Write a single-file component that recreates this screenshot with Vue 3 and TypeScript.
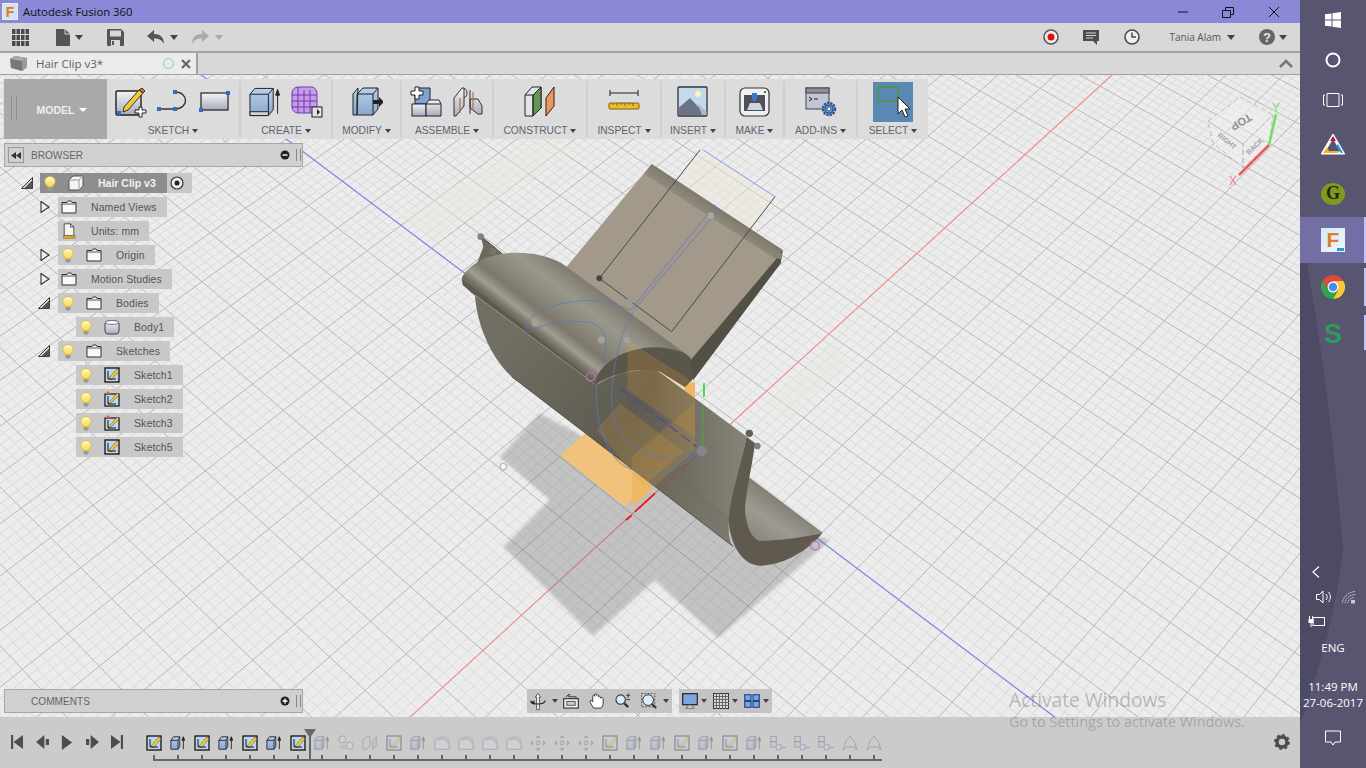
<script setup lang="ts">
// plane grid: two vanishing points, measured from the view
const O = [701, 451]
const VR = [3331, -1955]
const VB = [-2265, -1780]
const UA = 0.01277
const UB = 0.0125

function project(u: number, v: number) {
  const p = u * UA
  const q = v * UB
  const w = 1 + p + q
  const x = (O[0] + VR[0] * p + VB[0] * q) / w
  const y = (O[1] + VR[1] * p + VB[1] * q) / w
  return `${x.toFixed(1)},${y.toFixed(1)}`
}

function seg(u1: number, v1: number, u2: number, v2: number) {
  return `M${project(u1, v1)}L${project(u2, v2)}`
}

let minorPath = ''
let majorPath = ''
for (let i = -130; i <= 130; i++) {
  const n = i / 5
  const d = seg(n, -30, n, 30) + seg(-26, n, 26, n)
  if (i % 5 === 0) majorPath += d
  else minorPath += d
}
const redAxis = seg(-30, 0, 30, 0)
const blueAxis = seg(0, -30, 0, 30)

interface RibbonGroup {
  label: string
  width: number
  icons: string[]
  select?: boolean
}

const ribbon: RibbonGroup[] = [
  { label: 'SKETCH', width: 134, icons: ['r-sketch', 'r-line', 'r-rect'] },
  { label: 'CREATE', width: 92, icons: ['r-extrude', 'r-form'] },
  { label: 'MODIFY', width: 69, icons: ['r-press'] },
  { label: 'ASSEMBLE', width: 92, icons: ['r-assemble', 'r-joint'] },
  { label: 'CONSTRUCT', width: 94, icons: ['r-plane'] },
  { label: 'INSPECT', width: 74, icons: ['r-measure'] },
  { label: 'INSERT', width: 64, icons: ['r-picture'] },
  { label: 'MAKE', width: 59, icons: ['r-print'] },
  { label: 'ADD-INS', width: 73, icons: ['r-addin'] },
  { label: 'SELECT', width: 70, icons: ['r-select'], select: true }
]

interface TreeRow {
  label: string
  depth: number
  arrow?: 'open' | 'closed'
  bulb?: boolean
  icon: string
}

const tree: TreeRow[] = [
  { label: 'Named Views', depth: 1, arrow: 'closed', icon: 't-folder' },
  { label: 'Units: mm', depth: 1, icon: 't-units' },
  { label: 'Origin', depth: 1, arrow: 'closed', bulb: true, icon: 't-folder' },
  { label: 'Motion Studies', depth: 1, arrow: 'closed', icon: 't-folder' },
  { label: 'Bodies', depth: 1, arrow: 'open', bulb: true, icon: 't-folder' },
  { label: 'Body1', depth: 2, bulb: true, icon: 't-body' },
  { label: 'Sketches', depth: 1, arrow: 'open', bulb: true, icon: 't-folder' },
  { label: 'Sketch1', depth: 2, bulb: true, icon: 'tl-sketch' },
  { label: 'Sketch2', depth: 2, bulb: true, icon: 't-sketchw' },
  { label: 'Sketch3', depth: 2, bulb: true, icon: 't-sketchw' },
  { label: 'Sketch5', depth: 2, bulb: true, icon: 'tl-sketch' }
]

const timelineDone = ['tl-sketch', 'tl-extrude', 'tl-sketch', 'tl-extrude', 'tl-sketch', 'tl-extrude', 'tl-sketch']
const timelineRest = [
  'tl-extrude', 'tl-combine', 'tl-planes', 'tl-sketch', 'tl-extrude', 'tl-fillet', 'tl-fillet', 'tl-fillet',
  'tl-fillet', 'tl-move', 'tl-move', 'tl-move', 'tl-sketch', 'tl-extrude', 'tl-extrude', 'tl-sketch',
  'tl-extrude', 'tl-sketch', 'tl-extrude', 'tl-stack', 'tl-stack', 'tl-stack', 'tl-shell', 'tl-shell'
]

const modelPoints = [
  [122, 260, 10, '#7b7b78'], [158, 305, 11, '#77756c'], [478, 385, 9, '#403e38'], [570, 452, 10, '#9c9a90'],
  [285, 520, 10, '#a5a398'], [484, 570, 11, '#a5a49b'], [560, 570, 10, '#a5a49b'], [812, 197, 10, '#b0ab9e'],
  [1018, 318, 9, '#8a887e'], [928, 850, 11, '#55534c'], [952, 888, 10, '#77756e'], [785, 903, 16, '#8c8690']
] as const
</script>

<template>
  <svg class="defs" aria-hidden="true">
    <defs>
      <filter id="soft" x="-10%" y="-10%" width="120%" height="120%">
        <feGaussianBlur stdDeviation="4" />
      </filter>
      <linearGradient id="g-top" gradientUnits="userSpaceOnUse" x1="65" y1="385" x2="199" y2="211">
        <stop offset="0" stop-color="#69655a" />
        <stop offset=".06" stop-color="#7a7669" />
        <stop offset=".15" stop-color="#a09d91" />
        <stop offset=".3" stop-color="#7c786b" />
        <stop offset=".5" stop-color="#8c897d" />
        <stop offset=".72" stop-color="#9a988d" />
        <stop offset="1" stop-color="#7f7b6e" />
      </linearGradient>
      <linearGradient id="g-side" gradientUnits="userSpaceOnUse" x1="200" y1="550" x2="900" y2="1080">
        <stop offset="0" stop-color="#716e63" />
        <stop offset=".5" stop-color="#5e5b50" />
        <stop offset="1" stop-color="#7b796d" />
      </linearGradient>
      <linearGradient id="g-side-top" gradientUnits="userSpaceOnUse" x1="915" y1="880" x2="720" y2="960">
        <stop offset="0" stop-color="#9a988c" stop-opacity=".45" />
        <stop offset="1" stop-color="#9a988c" stop-opacity="0" />
      </linearGradient>
      <linearGradient id="g-lip" gradientUnits="userSpaceOnUse" x1="830" y1="170" x2="790" y2="230">
        <stop offset="0" stop-color="#7f7a6d" />
        <stop offset="1" stop-color="#a2998a" />
      </linearGradient>
      <linearGradient id="g-inner" gradientUnits="userSpaceOnUse" x1="1040" y1="1050" x2="960" y2="1170">
        <stop offset="0" stop-color="#7f7c71" />
        <stop offset=".55" stop-color="#9c9b92" />
        <stop offset="1" stop-color="#8b8980" />
      </linearGradient>
      <linearGradient id="ic-blue" x1="0" y1="0" x2="0" y2="1">
        <stop offset="0" stop-color="#b8cfe8" />
        <stop offset="1" stop-color="#88a8d0" />
      </linearGradient>
      <linearGradient id="ic-gray" x1="0" y1="0" x2="0" y2="1">
        <stop offset="0" stop-color="#f4f4f6" />
        <stop offset="1" stop-color="#a8acbc" />
      </linearGradient>
      <linearGradient id="bulb" x1="0" y1="0" x2="0" y2="1">
        <stop offset="0" stop-color="#fffcc8" />
        <stop offset="1" stop-color="#f8d63c" />
      </linearGradient>

      <symbol id="bulb-ic" viewBox="0 0 12 15">
        <path d="M6 .5C2.500 .5 .7 3 .7 5.500 .7 8 3 9 3.500 11H8.500C9 9 11.300 8 11.300 5.500 11.300 3 9.500 .5 6 .5z" fill="url(#bulb)" stroke="#c2ac4c" stroke-width=".7" />
        <rect x="3.500" y="11" width="5" height="3.500" rx="1" fill="#9a9a9a" />
      </symbol>
      <symbol id="r-sketch" viewBox="0 0 32 32">
        <rect x="1" y="5" width="25" height="24" rx="1" fill="url(#ic-gray)" stroke="#222" stroke-width="1.4" />
        <path d="M9 21 24 4l4 3-15 17-5 2z" fill="#f6c83c" stroke="#333" />
        <path d="M24 4l3-2 3 3-2 2z" fill="#d0743c" stroke="#333" />
        <rect x="2" y="25" width="4" height="4" fill="#3566c8" />
        <path d="M20 24h4v-3h3v3h4v3h-4v4h-3v-4h-4z" fill="#fff" stroke="#222" />
      </symbol>
      <symbol id="r-line" viewBox="0 0 32 32">
        <path d="M3 23H18C32 23 32 6 18 6" fill="none" stroke="#333" stroke-width="1.4" />
        <rect x="0" y="21" width="4" height="4" fill="#3566c8" />
        <rect x="16" y="21" width="4" height="4" fill="#3566c8" />
        <rect x="16" y="4" width="4" height="4" fill="#3566c8" />
      </symbol>
      <symbol id="r-rect" viewBox="0 0 32 32">
        <rect x="2" y="7" width="27" height="17" fill="url(#ic-gray)" stroke="#222" stroke-width="1.2" />
        <rect x="27" y="5" width="4" height="4" fill="#3566c8" />
        <rect x="0" y="22" width="4" height="4" fill="#3566c8" />
      </symbol>
      <symbol id="r-extrude" viewBox="0 0 33 32">
        <path d="M1 8 6 2H25V24L20 30H1z" fill="url(#ic-blue)" stroke="#222" />
        <path d="M1 8H20L25 2M20 8V30" fill="none" stroke="#222" />
        <path d="M1 26H20V30H1z" fill="#cfd4dc" stroke="#222" />
        <path d="M29.500 28V5M27.500 9 29.500 3l2 6z" fill="#222" stroke="#222" />
      </symbol>
      <symbol id="r-form" viewBox="0 0 32 32">
        <rect x="1" y="1" width="25" height="26" rx="6" fill="#c89cec" stroke="#6a3ca8" />
        <path d="M7 1V27M13 4V27M19 4V27M1 9H26M1 15H26M1 21H26" stroke="#6a3ca8" />
        <rect x="21" y="21" width="10" height="10" fill="#e4e4e4" stroke="#222" />
        <path d="M23 26h3v-3l3 3-3 3v-3z" fill="#222" />
      </symbol>
      <symbol id="r-press" viewBox="0 0 32 32">
        <path d="M2 29V8L7 2H7L6 29zM6 29V8L12 2H27V23L22 29z" fill="url(#ic-blue)" stroke="#222" />
        <path d="M6 8H22V29M22 8 27 2" fill="none" stroke="#222" />
        <path d="M22 14h6v-3l5 5-5 5v-3h-6z" fill="#222" />
      </symbol>
      <symbol id="r-assemble" viewBox="0 0 32 32">
        <path d="M5 6 9 2H20V18H5z" fill="#7fa4d2" stroke="#222" />
        <rect x="2" y="18" width="14" height="12" fill="url(#ic-gray)" stroke="#222" />
        <path d="M16 18l3-4h10l2 4v12H16z" fill="url(#ic-gray)" stroke="#222" />
        <path d="M16 18H31" stroke="#222" />
        <path d="M5 1h4v4h4v4H9v4H5V9H1V5h4z" fill="#fff" stroke="#222" />
      </symbol>
      <symbol id="r-joint" viewBox="0 0 32 32">
        <path d="M2 12 10 2h2V20L4 30H2zM18 13h8l4 7v8h-4l-8-6z" fill="url(#ic-gray)" stroke="#333" />
        <path d="M12 2c4 2 4 8 0 10M18 4v24" fill="none" stroke="#333" />
        <path d="M21 6V24M8 12V27" stroke="#d06830" stroke-width="1.2" />
      </symbol>
      <symbol id="r-plane" viewBox="0 0 32 32">
        <path d="M1 9 8 1h9V22L9 30H1z" fill="#dfe3ea" stroke="#222" />
        <path d="M9 9 17 1V22L9 30z" fill="#5e9a54" stroke="#222" />
        <path d="M1 9H9V30" fill="none" stroke="#222" />
        <path d="M22 12 30 1V20L22 30z" fill="#e89860" stroke="#401808" />
      </symbol>
      <symbol id="r-measure" viewBox="0 0 32 32">
        <path d="M2 7H30M2 4V10M30 4V10" stroke="#222" fill="none" />
        <rect x="1" y="17" width="30" height="6" rx="1" fill="#eebb30" stroke="#7a6010" />
        <path d="M5 17v2M9 17v3M13 17v2M17 17v3M21 17v2M25 17v3" stroke="#7a6010" />
      </symbol>
      <symbol id="r-picture" viewBox="0 0 32 32">
        <rect x="1" y="1" width="29" height="29" rx="1" fill="#c4d8ee" stroke="#333" stroke-width="1.3" />
        <circle cx="21" cy="8" r="3" fill="#fff4b0" />
        <path d="M1.500 29V22L13 12l16 17z" fill="#6a7484" />
        <path d="M20 17 29.500 26V29H25z" fill="#aeb6c2" />
      </symbol>
      <symbol id="r-print" viewBox="0 0 32 32">
        <rect x="1" y="2" width="29" height="28" rx="5" fill="#eef0f3" stroke="#333" stroke-width="1.2" />
        <rect x="5" y="9" width="21" height="16" fill="#4c505a" />
        <path d="M8 24 11 17H21L24 24z" fill="#d0d4dc" />
        <path d="M13 7H18V13L15.500 16 13 13z" fill="#3f78c8" />
        <rect x="25" y="5" width="2" height="2" fill="#1c8a2c" />
      </symbol>
      <symbol id="r-addin" viewBox="0 0 32 32">
        <rect x="1" y="2" width="23" height="21" fill="#c0c6d6" stroke="#444" />
        <rect x="1" y="2" width="23" height="5" fill="#8e8e94" stroke="#444" />
        <path d="M4 11 7 13 4 15M9 13H13" fill="none" stroke="#222" />
        <circle cx="24" cy="23" r="6" fill="#7fa3d8" stroke="#2e5490" stroke-width="2.500" stroke-dasharray="2.200 1" />
        <circle cx="24" cy="23" r="4" fill="#7fa3d8" stroke="#244a88" />
        <circle cx="24" cy="23" r="2" fill="#fff" stroke="#244a88" />
      </symbol>
      <symbol id="r-select" viewBox="0 0 40 40">
        <rect width="40" height="40" fill="#5a88b2" />
        <rect x="5" y="5" width="20" height="14" fill="none" stroke="#4a9a2a" stroke-width="1.200" />
        <path d="M25 15V32L29 28 32 35 35 34 32 27H37z" fill="#fff" stroke="#222" />
      </symbol>

      <symbol id="t-folder" viewBox="0 0 16 14">
        <path d="M1 2.500H6L7 1H10L11 2.500H15V13H1z" fill="#f8f8f8" stroke="#333" />
        <path d="M1 4H15" stroke="#555" />
      </symbol>
      <symbol id="t-units" viewBox="0 0 16 20">
        <path d="M2 1H10L14 5V16H2z" fill="#f4f4f4" stroke="#333" />
        <path d="M10 1V5H14" fill="none" stroke="#333" />
        <rect x="1" y="16" width="15" height="3" fill="#d8a428" stroke="#7a5a10" stroke-width=".5" />
      </symbol>
      <symbol id="t-cube" viewBox="0 0 16 16">
        <path d="M1 5 5 1H15V11L11 15H1z" fill="#f4f4f4" stroke="#555" />
        <path d="M11 5H1M11 5 15 1M11 5V15" fill="none" stroke="#999" />
      </symbol>
      <symbol id="t-body" viewBox="0 0 16 16">
        <rect x="1" y="2" width="14" height="13" rx="3" fill="url(#ic-gray)" stroke="#444" />
        <ellipse cx="8" cy="3.500" rx="6.500" ry="2" fill="#fff" stroke="#777" />
      </symbol>
      <symbol id="t-sketchw" viewBox="0 0 16 16">
        <rect x="1" y="3" width="14" height="12" fill="#bcd6f0" stroke="#111" stroke-width="1.200" />
        <path d="M4 13 13 2l2 2-9 9z" fill="#f6c83c" stroke="#443" stroke-width=".5" />
        <path d="M4 5V13H12" fill="none" stroke="#111" />
        <path d="M1 3 4 0l3 3z" fill="#e06040" />
      </symbol>
      <symbol id="tl-sketch" viewBox="0 0 16 16">
        <rect x="1" y="1" width="14" height="14" fill="#bcd6f0" stroke="#111" stroke-width="1.300" />
        <path d="M5 11 13 2l2 2-8 9z" fill="#f6c83c" stroke="#443" stroke-width=".5" />
        <path d="M4 4V12H12" fill="none" stroke="#111" />
      </symbol>
      <symbol id="tl-extrude" viewBox="0 0 18 16">
        <path d="M1 5 4 1H11V12L9 15H1z" fill="url(#ic-blue)" stroke="#223" />
        <path d="M1 5H9V15M9 5 11 1" fill="none" stroke="#223" />
        <path d="M15 15V3M13.500 5 15 1l1.500 4z" fill="#222" stroke="#222" />
      </symbol>
      <symbol id="tl-combine" viewBox="0 0 18 16">
        <circle cx="5" cy="4" r="4" fill="#dde" stroke="#555" />
        <rect x="2" y="10" width="6" height="5" fill="#8ab" />
        <circle cx="13" cy="11" r="4" fill="#dde" stroke="#555" />
      </symbol>
      <symbol id="tl-planes" viewBox="0 0 18 16">
        <path d="M1 5 5 1H9V11L5 15H1z" fill="#bcd8b0" stroke="#555" />
        <path d="M12 5 16 1V11L12 15z" fill="#e8b090" stroke="#555" />
      </symbol>
      <symbol id="tl-fillet" viewBox="0 0 18 16">
        <path d="M1 15V5C5 1 11 1 14 2L17 6V15z" fill="#dde" stroke="#555" />
        <path d="M3 6C6 3 12 3 14 5L16 8" fill="none" stroke="#555" />
      </symbol>
      <symbol id="tl-move" viewBox="0 0 16 16">
        <circle cx="8" cy="8" r="2" fill="none" stroke="#555" />
        <path d="M8 0 11 3H5zM8 16 5 13H11zM0 8 3 5V11zM16 8 13 11V5z" fill="#666" />
      </symbol>
      <symbol id="tl-stack" viewBox="0 0 18 16">
        <rect x="1" y="0.500" width="6" height="6" fill="none" stroke="#444" />
        <rect x="1" y="6.500" width="6" height="6" fill="none" stroke="#444" />
        <rect x="7" y="10" width="5.500" height="5.500" fill="#cde" stroke="#3566c8" />
        <path d="M18 13H14" stroke="#333" />
      </symbol>
      <symbol id="tl-shell" viewBox="0 0 16 16">
        <path d="M1 15 4 6 8 1l4 5 3 9-4-3H5z" fill="none" stroke="#555" />
      </symbol>
    </defs>
  </svg>

  <div class="screen">
    <div class="app">
      <header class="titlebar">
        <div class="title">
          <span class="app-logo"><span>F</span></span>
          <span>Autodesk Fusion 360</span>
        </div>
        <div class="win-btns">
          <svg width="46" height="20" viewBox="0 0 46 20"><path d="M19 10H29" stroke="#111" /></svg>
          <svg width="46" height="20" viewBox="0 0 46 20"><path d="M17.500 8.500H25.500V15.500H17.500zM20.500 8.500V5.500H28.500V12.500H25.500" fill="none" stroke="#111" /></svg>
          <svg width="46" height="20" viewBox="0 0 46 20"><path d="M18 5 28 15M28 5 18 15" stroke="#111" /></svg>
        </div>
      </header>

      <div class="toolbar">
        <svg class="waffle" width="17" height="17" viewBox="0 0 17 17">
          <path d="M0 0h3.500v5H0zM4.500 0H8v5H4.500zM9 0h3.500v5H9zM13.500 0H17v5h-3.500zM0 6h3.500v5H0zM4.500 6H8v5H4.500zM9 6h3.500v5H9zM13.500 6H17v5h-3.500zM0 12h3.500v5H0zM4.500 12H8v5H4.500zM9 12h3.500v5H9zM13.500 12H17v5h-3.500z" fill="#4a4a4a" />
        </svg>
        <svg class="file" width="14" height="17" viewBox="0 0 14 17"><path d="M0 0H9L14 5V17H0z" fill="#555" /><path d="M9 0V5H14" fill="none" stroke="#d8d8d8" /></svg>
        <span class="caret small-gap" />
        <svg class="save" width="17" height="17" viewBox="0 0 17 17">
          <path d="M1 0H14L17 3V16a1 1 0 0 1-1 1H1a1 1 0 0 1-1-1V1a1 1 0 0 1 1-1z" fill="#555" />
          <rect x="3" y="1.500" width="11" height="6" fill="#d8d8d8" /><rect x="4" y="11" width="9" height="6" fill="#d8d8d8" /><rect x="5" y="12" width="2" height="4" fill="#555" />
        </svg>
        <svg class="undo" width="17" height="14" viewBox="0 0 17 14"><path d="M7 0V4C13 4 17 7 17 14 15 10 12 8.500 7 8.500V12L0 6z" fill="#555" /></svg>
        <span class="caret small-gap" />
        <svg class="redo" width="17" height="14" viewBox="0 0 17 14"><path d="M10 0V4C4 4 0 7 0 14 2 10 5 8.500 10 8.500V12L17 6z" fill="#aaa" /></svg>
        <span class="caret small-gap light" />
        <div class="toolbar-right">
          <svg width="16" height="16" viewBox="0 0 16 16"><circle cx="8" cy="8" r="7" fill="#eee" stroke="#555" stroke-width="1.500" /><circle cx="8" cy="8" r="3.500" fill="#e01010" /></svg>
          <svg class="comment" width="16" height="15" viewBox="0 0 16 15"><path d="M0 0H16V11H14V15L10 11H0z" fill="#4c4c4c" /><path d="M3 3H13M3 5.500H13M3 8H10" stroke="#d8d8d8" /></svg>
          <svg class="clock" width="16" height="16" viewBox="0 0 16 16"><circle cx="8" cy="8" r="7" fill="#eee" stroke="#4c4c4c" stroke-width="1.600" /><path d="M8 3.500V8H12" fill="none" stroke="#4c4c4c" stroke-width="1.500" /></svg>
          <span class="user">Tania Alam</span>
          <span class="caret" />
          <span class="help">?</span>
          <span class="caret help-caret" />
        </div>
      </div>

      <div class="tabs">
        <div class="tab">
          <svg width="17" height="15" viewBox="0 0 17 15"><path d="M0 3 5 0 17 2V11L12 15 1 12z" fill="#777" /><path d="M12 5V15L17 11V2z" fill="#999" /><path d="M0 3 12 5 17 2 5 0z" fill="#aaa" /></svg>
          <span class="tab-name">Hair Clip v3*</span>
          <span class="tab-dot" />
          <svg class="tab-x" width="10" height="10" viewBox="0 0 10 10"><path d="M1 1 9 9M9 1 1 9" stroke="#666" stroke-width="2.200" /></svg>
        </div>
        <svg class="tab-up" width="14" height="9" viewBox="0 0 14 9"><path d="M1 8 7 2l6 6" fill="none" stroke="#777" stroke-width="2.500" /></svg>
      </div>

      <main class="viewport">
        <svg class="canvas" viewBox="0 75 1300 642">
          <rect x="0" y="75" width="1300" height="642" fill="#ececec" />
          <path :d="minorPath" stroke="#dadada" stroke-width="1" fill="none" />
          <path :d="majorPath" stroke="#b8b8b8" stroke-width="1" fill="none" />
          <path d="M398 216 440 238 575 150 552 135zM770 402 835 345 852 362 785 418z" fill="#efe7da" opacity=".35" />
          <path :d="redAxis" stroke="#f39292" stroke-width="1.200" fill="none" />
          <path :d="blueAxis" stroke="#8484f2" stroke-width="1.200" fill="none" />

          <g transform="translate(440 150) scale(.33333)">
            <path d="M300 790 180 920 330 1050 190 1190 460 1458 645 1290 834 1464 1170 1170 780 1050z" fill="#5a5a5a" opacity=".28" filter="url(#soft)" />
            <path d="M780 0 1005 140 935 235 710 90z" fill="#efe7da" opacity=".45" />
            <path d="M360 915 540 760 730 905 555 1070z" fill="#f0c27c" />
            <path d="M735 705 765 695V770L730 760zM575 1000 640 1015 575 1072z" fill="#f0c070" />

            <!-- back plate -->
            <path d="M635 42 1028 300 1022 340 750 690 640 600 380 350z" fill="#a2998a" />
            <path d="M635 42 1028 300 1008 328 612 72z" fill="url(#g-lip)" />
            <path d="M1008 328 1028 300 1022 340 760 690 735 650z" fill="#524f44" />

            <!-- left spike and top surface -->
            <path d="M122 258 192 318 108 348 130 290z" fill="#6d695e" />
            <path d="M122 258 192 316" stroke="#3d3b35" stroke-width="3" />
            <path d="M65 385 68 405 105 437 468 707 480 690z" fill="#5e594d" />
            <path d="M65 385C90 330 180 300 260 310 320 315 360 335 380 350L750 620 700 600C600 590 500 630 470 700z" fill="url(#g-top)" />

            <!-- long outer surface -->
            <path d="M105 435 468 705C520 670 590 655 650 660L920 860C900 960 880 1050 868 1100 862 1150 870 1180 880 1190L215 680C150 620 110 520 105 435z" fill="url(#g-side)" />
            <path d="M650 660 920 860C900 960 880 1050 868 1100L640 920z" fill="url(#g-side-top)" />
            <path d="M105 435 468 705" stroke="#c7c4ba" stroke-width="1.500" />
            <path d="M215 680 880 1190" stroke="#343330" stroke-width="2" />

            <!-- section cut in the middle -->
            <path d="M465 705C470 640 560 590 650 592 700 595 735 605 752 625L757 690 735 712 660 665C600 650 520 670 465 705z" fill="#5a564a" />

            <!-- open end -->
            <path d="M925 980 1148 1148C1100 1160 1030 1170 965 1172 945 1175 920 1140 916 1085 915 1040 920 1010 925 980z" fill="url(#g-inner)" />
            <path d="M920 860 945 880C935 960 915 1030 916 1085 920 1140 945 1175 965 1172 1030 1170 1100 1160 1148 1148 1100 1205 1030 1245 960 1247 900 1245 868 1170 866 1110 870 1040 905 940 920 860z" fill="#5f5a4d" />

            <!-- origin planes seen through the body -->
            <path d="M562 570 765 700V860L562 720z" fill="#e6a030" opacity=".2" />
            <path d="M470 840 540 760 730 905 610 1010z" fill="#e6a030" opacity=".2" />
            <path d="M575 920 765 760V900L575 1070z" fill="#e6a030" opacity=".2" />

            <path d="M780 0 478 385 695 545 1005 140" fill="none" stroke="#4a4840" stroke-width="3" />
            <path d="M790 0 1005 140" stroke="#7f9fee" stroke-width="3" />
            <path d="M825 165 570 482C500 440 380 440 290 490 265 505 255 530 258 552 300 520 400 505 460 520 500 540 505 580 490 640M835 180 590 470C560 510 540 570 530 620 515 680 510 760 520 800 540 880 620 925 700 925L775 905M470 700C465 780 480 880 540 940 590 975 660 975 700 960L785 905M810 172Q822 158 835 178" fill="none" stroke="#5a78c4" stroke-width="2.500" opacity=".9" />
            <path d="M540 715 770 890" stroke="#4848a8" stroke-width="3.500" stroke-dasharray="34 12" />
            <path d="M792 700V740" stroke="#1ee01e" stroke-width="5" />
            <path d="M788 765V890" stroke="#3fb03f" stroke-width="3" stroke-dasharray="60 8" />
            <path d="M558 1110 575 1096M585 1085 645 1030" stroke="#f01010" stroke-width="5" />
            <path d="M665 1012 770 915" stroke="#b03c3c" stroke-width="3" stroke-dasharray="26 14" />

            <circle v-for="(p, i) in modelPoints" :key="i" :cx="p[0]" :cy="p[1]" :r="p[2]" :fill="p[3]" opacity=".9" />
            <circle cx="190" cy="950" r="10" fill="#f4f4f4" stroke="#999" stroke-width="2.500" />
            <circle cx="452" cy="680" r="13" fill="none" stroke="#b070b0" stroke-width="4" />
            <circle cx="1125" cy="1187" r="13" fill="none" stroke="#c070c0" stroke-width="4" />
          </g>

          <!-- view cube -->
          <g>
            <path d="M1208 121 1240 97 1273 115 1269 145 1243 168 1213 143z" fill="#f2f2f2" opacity=".45" />
            <path d="M1208 121 1240 97 1273 115 1243 144zM1208 121 1243 144V168L1213 143zM1243 144 1273 115 1269 145 1243 168z" fill="none" stroke="#bdbdbd" stroke-dasharray="5 3" />
            <path d="M1239 175 1269 145" stroke="#ee5a5a" stroke-width="2.500" />
            <path d="M1269 145 1276 114" stroke="#6fe060" stroke-width="2.500" />
            <text class="cube-top" transform="translate(1249 113) rotate(149)">TOP</text>
            <text class="cube-side" transform="translate(1217 136) rotate(39)">RIGHT</text>
            <text class="cube-side" transform="translate(1249 155) rotate(-44)">BACK</text>
            <text class="axis-y" x="1272" y="112">Y</text>
            <text class="axis-x" x="1229" y="185">X</text>
          </g>
        </svg>

        <div class="ribbon">
          <div class="model">
            <span class="grip" />
            <span class="model-label">MODEL</span>
            <span class="caret white" />
          </div>
          <section v-for="g in ribbon" :key="g.label" class="rgroup" :style="{ width: g.width + 'px' }">
            <div class="ricons">
              <svg v-for="ic in g.icons" :key="ic" class="ri" :class="{ 'ri-select': g.select }"><use :href="'#' + ic" /></svg>
            </div>
            <div class="rlabel">{{ g.label }}<span class="caret tiny" /></div>
          </section>
        </div>

        <aside class="browser">
          <div class="panel-head">
            <span class="collapse-btn"><svg width="10" height="7" viewBox="0 0 10 7"><path d="M5 0V7L0 3.500zM10 0V7L5 3.500z" fill="#333" /></svg></span>
            <span class="panel-title">BROWSER</span>
            <svg class="pm" width="10" height="10" viewBox="0 0 10 10"><circle cx="5" cy="5" r="4.500" fill="#222" /><path d="M2.500 5H7.500" stroke="#fff" stroke-width="1.400" /></svg>
            <span class="panel-grip" />
          </div>
          <div class="tree">
            <div class="tree-line d0">
              <svg class="arrow" width="12" height="12" viewBox="0 0 12 12"><path d="M0.500 11.500H11.500V0.500z" fill="#ddd" stroke="#333" /><path d="M3 11.500H11.500V3z" fill="#555" /></svg>
              <div class="root-row">
                <div class="root-dark">
                  <svg class="bulb" width="12" height="15"><use href="#bulb-ic" /></svg>
                  <svg class="root-cube" width="16" height="16"><use href="#t-cube" /></svg>
                  <span>Hair Clip v3</span>
                </div>
                <svg class="radio" width="14" height="14" viewBox="0 0 14 14"><circle cx="7" cy="7" r="6" fill="#eee" stroke="#333" stroke-width="1.200" /><circle cx="7" cy="7" r="2.500" fill="#222" /></svg>
              </div>
            </div>
            <div v-for="r in tree" :key="r.label" class="tree-line" :class="'d' + r.depth">
              <span class="arrow-slot">
                <svg v-if="r.arrow === 'closed'" width="10" height="12" viewBox="0 0 10 12"><path d="M1 .5 9 6 1 11.500z" fill="#eee" stroke="#333" stroke-width="1.100" /></svg>
                <svg v-else-if="r.arrow === 'open'" class="open-arrow" width="12" height="12" viewBox="0 0 12 12"><path d="M0.500 11.500H11.500V0.500z" fill="#ddd" stroke="#333" /><path d="M3 11.500H11.500V3z" fill="#555" /></svg>
              </span>
              <div class="row">
                <svg v-if="r.bulb" class="bulb" width="12" height="15"><use href="#bulb-ic" /></svg>
                <svg class="row-icon" :class="{ 'no-bulb': !r.bulb }" width="16" height="16"><use :href="'#' + r.icon" /></svg>
                <span class="row-label">{{ r.label }}</span>
              </div>
            </div>
          </div>
        </aside>

        <aside class="comments">
          <span class="panel-title">COMMENTS</span>
          <svg class="pm" width="10" height="10" viewBox="0 0 10 10"><circle cx="5" cy="5" r="4.500" fill="#222" /><path d="M2.500 5H7.500M5 2.500V7.500" stroke="#fff" stroke-width="1.400" /></svg>
          <span class="panel-grip" />
        </aside>

        <div class="navbar">
          <div class="nav-group">
            <svg width="16" height="17" viewBox="0 0 18 18">
              <path d="M9 0 12 4H10.500V18H7.500V4H6z" fill="#fff" stroke="#222" stroke-width=".8" />
              <path d="M1 8C1 13 17 13 17 8" fill="none" stroke="#222" stroke-width="1.200" />
              <path d="M0 10 5 8V13z" fill="#222" />
            </svg>
            <span class="caret tiny nav-caret" />
            <svg class="gap5" width="16" height="15" viewBox="0 0 17 16"><path d="M3 3 7 0 6 3" fill="none" stroke="#333" /><path d="M6 3H14V5" fill="none" stroke="#333" /><rect x=".7" y="5" width="15.600" height="10" fill="#eee" stroke="#333" stroke-width="1.200" /><rect x="4" y="8" width="9" height="4" fill="#ccc" stroke="#555" /></svg>
            <svg class="gap10" width="16" height="16" viewBox="0 0 17 17"><path d="M5 16C3 13 1 10 1 8.500 2 7.500 3 8 4 9.500V3.500C4 2 6 2 6 3.500V2C6 .5 8 .5 8 2V2.500C8 1.500 10 1.500 10 3V4C10 3 12 3 12 4.500V5.500C12 4.500 15 4.500 15 6V11C15 13 14 15 13 16z" fill="#fff" stroke="#222" stroke-width=".9" /></svg>
            <svg class="gap10" width="16" height="16" viewBox="0 0 17 17"><circle cx="6" cy="7" r="5" fill="#dcecf8" stroke="#333" stroke-width="1.100" /><path d="M10 11 14 15" stroke="#333" stroke-width="2.400" /><path d="M14 .5V5M12 2.500H16M12 7H16" stroke="#333" /></svg>
            <svg class="gap10" width="16" height="16" viewBox="0 0 18 18"><path d="M.5 .5H15.500V15.500H.5z" fill="none" stroke="#444" stroke-dasharray="2 1.500" /><circle cx="8" cy="8" r="6" fill="#dcecf8" stroke="#333" stroke-width="1.100" /><path d="M12 12 17 17" stroke="#333" stroke-width="2.400" /></svg>
            <span class="caret tiny nav-caret" />
          </div>
          <div class="nav-group g2">
            <svg width="16" height="16" viewBox="0 0 16 16"><rect x=".7" y=".7" width="14.600" height="11" fill="#7ea6de" stroke="#222" stroke-width="1.200" /><path d="M6 12H10V14H12V15.500H4V14H6z" fill="#ccc" stroke="#444" stroke-width=".5" /></svg>
            <span class="caret tiny nav-caret" />
            <svg class="gap6" width="16" height="16" viewBox="0 0 16 16"><rect x=".5" y=".5" width="15" height="15" fill="#ddd" stroke="#333" /><path d="M3.500 0V16M6.500 0V16M9.500 0V16M12.500 0V16M0 3.500H16M0 6.500H16M0 9.500H16M0 12.500H16" stroke="#666" /></svg>
            <span class="caret tiny nav-caret" />
            <svg class="gap6" width="16" height="14" viewBox="0 0 16 14"><rect x=".7" y=".7" width="6.300" height="5.800" fill="#7ea6de" stroke="#234a8a" stroke-width="1.200" /><rect x="9" y=".7" width="6.300" height="5.800" fill="#7ea6de" stroke="#234a8a" stroke-width="1.200" /><rect x=".7" y="7.500" width="6.300" height="5.800" fill="#7ea6de" stroke="#234a8a" stroke-width="1.200" /><rect x="9" y="7.500" width="6.300" height="5.800" fill="#7ea6de" stroke="#234a8a" stroke-width="1.200" /></svg>
            <span class="caret tiny nav-caret" />
          </div>
        </div>
      </main>

      <footer class="timeline">
        <div class="controls">
          <svg width="12" height="14" viewBox="0 0 14 14" preserveAspectRatio="none"><path d="M0 0H2.500V14H0zM14 0V14L3 7z" fill="#4d4d4d" /></svg>
          <svg width="13" height="14" viewBox="0 0 14 14" preserveAspectRatio="none"><path d="M9 0V14L0 7zM10.500 4H14V10H10.500z" fill="#4d4d4d" /></svg>
          <svg width="12" height="15" viewBox="0 0 14 16" preserveAspectRatio="none"><path d="M1 0 13 8 1 16z" fill="#4d4d4d" /></svg>
          <svg width="13" height="14" viewBox="0 0 14 14" preserveAspectRatio="none"><path d="M5 0V14L14 7zM0 4H3.500V10H0z" fill="#4d4d4d" /></svg>
          <svg width="12" height="14" viewBox="0 0 14 14" preserveAspectRatio="none"><path d="M11.500 0H14V14H11.500zM0 0V14L11 7z" fill="#4d4d4d" /></svg>
        </div>
        <div class="track">
          <span v-for="(ic, i) in timelineDone" :key="'d' + i" class="step">
            <svg width="16" height="16"><use :href="'#' + ic" /></svg>
          </span>
          <span v-for="(ic, i) in timelineRest" :key="'r' + i" class="step rest">
            <svg width="16" height="16"><use :href="'#' + ic" /></svg>
          </span>
          <span class="marker" />
        </div>
        <svg class="gear" width="16" height="16" viewBox="0 0 16 16">
          <circle cx="8" cy="8" r="5" fill="none" stroke="#4d4d4d" stroke-width="3.500" />
          <circle cx="8" cy="8" r="6.700" fill="none" stroke="#4d4d4d" stroke-width="2.600" stroke-dasharray="2.600 2.660" />
        </svg>
      </footer>
    </div>

    <nav class="taskbar">
      <svg class="wedge" width="66" height="768" viewBox="0 0 66 768"><path d="M0 225C20 330 35 450 43 550 35 620 15 680 0 725z" fill="#4d4a63" /></svg>
      <div class="tb h40">
        <svg width="16" height="16" viewBox="0 0 16 16"><path d="M0 2.300 6.500 1.400V7.500H0zM7.500 1.200 16 0V7.500H7.500zM0 8.500H6.500V14.600L0 13.700zM7.500 8.500H16V16L7.500 14.800z" fill="#fff" /></svg>
      </div>
      <div class="tb h40">
        <svg width="16" height="16" viewBox="0 0 16 16"><circle cx="8" cy="8" r="6.500" fill="none" stroke="#fff" stroke-width="2" /></svg>
      </div>
      <div class="tb h40">
        <svg width="20" height="14" viewBox="0 0 20 14"><path d="M4 .5H16V13.500H4zM2 2H.5V12H2M18 2H19.500V12H18" fill="none" stroke="#fff" /></svg>
      </div>
      <div class="tb h50">
        <svg width="24" height="22" viewBox="0 0 24 22">
          <path d="M12 2 22 19H2z" fill="none" stroke="#fff" stroke-width="3" />
          <path d="M9 7 12 2 15 7z" fill="#c8102e" />
          <path d="M17 10 22 19H20L15 12z" fill="#1ea0d8" />
          <path d="M2 19 6 13 8 17 H16 L18 19z" fill="#f5b028" />
        </svg>
      </div>
      <div class="tb h47">
        <span class="g-badge"><span>G</span></span>
      </div>
      <div class="tb h46 active">
        <span class="f-tile"><span>F</span><i class="f-mark" /></span>
      </div>
      <div class="tb h47 pinned">
        <svg width="24" height="24" viewBox="0 0 24 24">
          <path d="M12 0A12 12 0 0 1 22.400 6H12z" fill="#dd4b3e" />
          <path d="M1.600 6A12 12 0 0 1 12 0 V6 H12 L7 14z" fill="#dd4b3e" />
          <path d="M22.400 6A12 12 0 0 1 12 24L17 15 12 6z" fill="#fcc934" />
          <path d="M12 24A12 12 0 0 1 1.600 6L7 15 17 15z" fill="#2fa54c" />
          <circle cx="12" cy="12" r="5.500" fill="#fff" />
          <circle cx="12" cy="12" r="4.300" fill="#4a8cf0" />
        </svg>
      </div>
      <div class="tb h47 pinned short">
        <span class="s-logo">S</span>
      </div>
      <div class="tb-spacer" />
      <div class="tb h26">
        <svg class="chev" width="8" height="12" viewBox="0 0 8 12"><path d="M7 .5 1 6l6 5.500" fill="none" stroke="#fff" stroke-width="1.200" /></svg>
      </div>
      <div class="tb h24 tray">
        <svg width="18" height="14" viewBox="0 0 18 14"><path d="M.5 4.500H3.500L7 1V13L3.500 9.500H.5zM10 4C11.500 6 11.500 8 10 10M12.500 2C15 5 15 9 12.500 12" fill="none" stroke="#fff" /></svg>
        <svg width="14" height="14" viewBox="0 0 14 14"><path d="M.5 13C1 7 6 2 13 1.500M3 13C3.500 8.500 7.500 5 13 4.500M5.500 13C6 10.500 8.500 8 12 7.500" fill="none" stroke="#c8c8d8" stroke-dasharray="1.500 .6" /><path d="M9 10H13V13.500H9z" fill="#c8c8d8" /></svg>
      </div>
      <div class="tb h24 tray-left">
        <svg width="17" height="11" viewBox="0 0 17 11"><rect x="5" y="1.500" width="11.500" height="8" fill="none" stroke="#fff" /><rect x=".5" y="3" width="5" height="4" fill="#fff" /><path d="M1.500 3V0M4.500 3V0M3 7V11" stroke="#fff" /></svg>
      </div>
      <div class="tb h32 tb-text eng">ENG</div>
      <div class="tb h12" />
      <div class="tb clock-box tb-text">
        <div>11:49 PM</div>
        <div>27-06-2017</div>
      </div>
      <div class="tb notif">
        <svg width="16" height="16" viewBox="0 0 16 16"><path d="M.5 1H15.500V12H10L8 15 6 12H.5z" fill="none" stroke="#fff" /></svg>
      </div>
    </nav>

    <div class="watermark">
      <div class="wm-big">Activate Windows</div>
      <div class="wm-small">Go to Settings to activate Windows.</div>
    </div>
  </div>
</template>

<style scoped>
.defs {
  position: absolute;
  width: 0;
  height: 0;
}

.screen {
  position: relative;
  display: flex;
  width: 1366px;
  height: 768px;
  overflow: hidden;
  font-family: "Liberation Sans", Arial, sans-serif;
}

.app {
  display: flex;
  flex-direction: column;
  width: 1300px;
  height: 768px;
}

.titlebar {
  display: flex;
  align-items: center;
  justify-content: space-between;
  height: 23px;
  flex: none;
  background: #8b88d7;
}

.title {
  display: flex;
  align-items: center;
  gap: 5px;
  padding-left: 2px;
  font-family: "Open Sans", sans-serif;
  font-size: 11.300px;
  color: #111;
}

.app-logo {
  display: flex;
  align-items: center;
  justify-content: center;
  width: 14px;
  height: 15px;
  background: #cfe3f2;
  border: 1px solid #e8eef4;
}

.app-logo span {
  font-family: "Liberation Sans", sans-serif;
  font-size: 14px;
  font-weight: 700;
  color: #e07a20;
}

.win-btns {
  display: flex;
  padding-right: 3px;
}

.toolbar {
  display: flex;
  align-items: center;
  flex: none;
  height: 28px;
  padding-left: 12px;
  background: #d8d8d8;
  border-bottom: 2px solid #a2a2a2;
  box-sizing: content-box;
}

.waffle { margin-right: 27px; }
.save { margin-left: 24px; }
.undo { margin-left: 23px; }
.redo { margin-left: 14px; }

.caret {
  display: inline-block;
  width: 0;
  height: 0;
  border-left: 4px solid transparent;
  border-right: 4px solid transparent;
  border-top: 5px solid #444;
}

.caret.small-gap { margin-left: 5px; }
.caret.light { border-top-color: #aaa; margin-left: 6px; }
.undo + .caret { margin-left: 6px; }
.caret.white { border-top-color: #fff; border-top-width: 4px; }
.caret.tiny { border-left-width: 3px; border-right-width: 3px; border-top-width: 4px; }

.toolbar-right {
  display: flex;
  align-items: center;
  margin-left: auto;
  padding-right: 13px;
}

.comment { margin-left: 24px; }
.clock { margin-left: 25px; }

.user {
  margin-left: 29px;
  margin-right: 6px;
  font-family: "Open Sans", sans-serif;
  font-size: 10px;
  color: #555;
}

.help {
  display: flex;
  align-items: center;
  justify-content: center;
  width: 16px;
  height: 16px;
  margin-left: 24px;
  border-radius: 50%;
  background: #666;
  color: #e8e8e8;
  font-size: 13px;
  font-weight: 700;
}

.help-caret { margin-left: 4px; }

.tabs {
  display: flex;
  align-items: stretch;
  justify-content: space-between;
  flex: none;
  height: 21px;
  background: #d8d8d8;
  border-bottom: 1px solid #a2a2a2;
}

.tab {
  display: flex;
  align-items: center;
  width: 198px;
  padding-left: 10px;
  box-sizing: border-box;
  background: #ebebeb;
  border-right: 2px solid #a2a2a2;
}

.tab-name {
  margin-left: 9px;
  width: 127px;
  font-family: "Open Sans", sans-serif;
  font-size: 11.500px;
  color: #5a5f68;
}

.tab-dot {
  width: 9px;
  height: 9px;
  border: 1px solid #7fd0bd;
  border-radius: 50%;
}

.tab-x { margin-left: 7px; }

.tab-up {
  align-self: center;
  margin-right: 7px;
}

.viewport {
  position: relative;
  flex: 1;
  min-height: 0;
  overflow: hidden;
  background: #ececec;
}

.canvas {
  position: absolute;
  inset: 0;
  width: 1300px;
  height: 642px;
}

.cube-top {
  font: 700 11px "Liberation Sans", sans-serif;
  fill: #909090;
}

.cube-side {
  font: 700 7px "Liberation Sans", sans-serif;
  fill: #a4a4a4;
}

.axis-y {
  font: 12px "Liberation Sans", sans-serif;
  fill: #7fe070;
}

.axis-x {
  font: 12px "Liberation Sans", sans-serif;
  fill: #f08080;
}

.ribbon {
  position: absolute;
  left: 3px;
  top: 4px;
  display: flex;
  height: 60px;
  padding-left: 1px;
  background: #dcdcdc;
}

.model {
  position: relative;
  display: flex;
  align-items: center;
  justify-content: center;
  gap: 5px;
  width: 103px;
  box-sizing: border-box;
  padding: 2px 0 0 13px;
  background: #a9a9a9;
}

.grip {
  position: absolute;
  left: 7px;
  top: 17px;
  width: 4px;
  height: 24px;
  border-left: 1px solid #8c8c8c;
  border-right: 1px solid #8c8c8c;
}

.model-label {
  font-size: 10.500px;
  font-weight: 700;
  color: #eee;
}

.rgroup {
  display: flex;
  flex-direction: column;
  align-items: center;
  flex: none;
  box-sizing: border-box;
  height: 56px;
  margin-top: 2px;
  padding-top: 5px;
  border-right: 2px solid #cfcfcf;
}

.rgroup:last-child { border-right: none; }

.ricons {
  display: flex;
  gap: 10px;
  height: 32px;
}

.ri {
  width: 32px;
  height: 32px;
}

.ri-select {
  width: 40px;
  height: 40px;
  margin-top: -4px;
}

.rlabel {
  display: flex;
  align-items: center;
  gap: 3px;
  margin-top: 7px;
  font-size: 10.200px;
  line-height: 12px;
  color: #5c6470;
}

.browser {
  position: absolute;
  left: 4px;
  top: 68px;
  width: 299px;
}

.panel-head, .comments {
  display: flex;
  align-items: center;
  box-sizing: border-box;
  height: 24px;
  background: #d0d0d0;
  border: 1px solid #a6a6a6;
}

.collapse-btn {
  display: flex;
  align-items: center;
  justify-content: center;
  width: 14px;
  height: 14px;
  margin-left: 3px;
  border: 1px solid #999;
}

.panel-title {
  margin-left: 7px;
  font-size: 10.100px;
  color: #666;
}

.comments .panel-title { margin-left: 26px; }

.pm { margin-left: auto; }

.panel-grip {
  width: 3px;
  height: 12px;
  margin: 0 1px 0 6px;
  border-left: 1px solid #888;
  border-right: 1px solid #888;
}

.tree {
  display: flex;
  flex-direction: column;
  gap: 4px;
  margin-top: 6px;
}

.tree-line {
  display: flex;
  align-items: center;
  height: 20px;
}

.d0 { margin-left: 17px; }
.d1 { margin-left: 34px; }
.d2 { margin-left: 52px; }

.arrow { margin-right: 7px; }

.arrow-slot {
  display: flex;
  align-items: center;
  width: 20px;
  flex: none;
  padding-left: 2px;
  box-sizing: border-box;
}

.open-arrow { margin-left: -2px; }

.root-row {
  display: flex;
  align-items: center;
  width: 152px;
  height: 20px;
  background: #c8c8c8;
}

.root-dark {
  display: flex;
  align-items: center;
  width: 127px;
  height: 20px;
  box-sizing: border-box;
  background: #8e8e8e;
  font-size: 10.500px;
  font-weight: 700;
  color: #f2f2f2;
}

.root-cube { margin-left: 12px; margin-right: 14px; }
.radio { margin-left: 3px; }

.row {
  display: flex;
  align-items: center;
  height: 20px;
  padding-right: 10px;
  background: #c8c8c8;
}

.bulb { margin-left: 4px; flex: none; }
.row .row-icon { margin-left: 12px; flex: none; }
.row .row-icon.no-bulb { margin-left: 3px; }

.row-label {
  margin-left: 14px;
  font-size: 10.500px;
  color: #555;
  letter-spacing: .1px;
}

.comments {
  position: absolute;
  left: 4px;
  bottom: 4px;
  width: 299px;
}

.navbar {
  position: absolute;
  left: 527px;
  bottom: 4px;
  display: flex;
  gap: 7px;
}

.nav-group {
  display: flex;
  align-items: center;
  box-sizing: border-box;
  width: 145px;
  height: 24px;
  padding-left: 3px;
  background: #c4c4c4;
}

.nav-group svg { flex: none; }

.nav-group.g2 { width: 93px; }

.nav-caret { margin-left: 6px; }
.g2 .nav-caret { margin-left: 3px; }
.gap5 { margin-left: 5px; }
.gap6 { margin-left: 6px; }
.gap10 { margin-left: 10px; }

.timeline {
  position: relative;
  display: flex;
  flex: none;
  height: 51px;
  background: #cbcbcb;
}

.controls {
  display: flex;
  align-items: center;
  gap: 12.500px;
  width: 142px;
  height: 51px;
  padding-left: 11px;
  padding-bottom: 1px;
  box-sizing: border-box;
}

.track {
  position: relative;
  display: flex;
  height: 44px;
}

.track::before {
  content: "";
  position: absolute;
  left: 11px;
  right: 4px;
  top: 42px;
  height: 2px;
  background: #666;
}

.step {
  position: relative;
  display: flex;
  justify-content: center;
  width: 24px;
  padding-top: 18px;
  box-sizing: border-box;
}

.step::after {
  content: "";
  position: absolute;
  left: 11px;
  top: 38px;
  width: 2px;
  height: 4px;
  background: #666;
}

.step.rest svg { opacity: .32; }

.marker {
  position: absolute;
  left: 167px;
  top: 12px;
  width: 2px;
  height: 31px;
  background: #666;
}

.marker::before {
  content: "";
  position: absolute;
  left: -5px;
  top: 0;
  width: 0;
  height: 0;
  border-left: 6px solid transparent;
  border-right: 6px solid transparent;
  border-top: 9px solid #6a6a6a;
}

.gear {
  position: absolute;
  right: 10px;
  top: 17px;
}

.taskbar {
  position: relative;
  display: flex;
  flex-direction: column;
  width: 66px;
  height: 768px;
  background: #57556f;
}

.wedge {
  position: absolute;
  left: 0;
  top: 0;
}

.tb {
  position: relative;
  display: flex;
  align-items: center;
  justify-content: center;
  flex: none;
}

.h40 { height: 40px; }
.h46 { height: 46px; }
.h47 { height: 47px; }
.h50 { height: 50px; }
.h26 { height: 26px; }
.h24 { height: 24px; }
.h32 { height: 32px; }
.h12 { height: 12px; }
.notif { height: 55px; padding-bottom: 5px; box-sizing: border-box; }
.tb-spacer { flex: 1; }

.active {
  background: #736fa5;
}

.active::after, .pinned::after {
  content: "";
  position: absolute;
  right: 0;
  top: 0;
  width: 2px;
  height: 100%;
  background: #c9c5f2;
}

.pinned::after {
  top: 5px;
  height: 38px;
}

.pinned.short::after {
  height: 35px;
}

.tray {
  gap: 8px;
  padding-left: 5px;
}

.tray-left {
  justify-content: flex-start;
  padding-left: 8px;
}

.chev { margin-right: 34px; }

.tb-text {
  font-family: "Open Sans", sans-serif;
  font-size: 11.500px;
  color: #fff;
}

.eng {
  box-sizing: border-box;
  padding-bottom: 3px;
}

.clock-box {
  flex-direction: column;
  height: 36px;
  line-height: 16px;
}

.g-badge {
  display: flex;
  align-items: center;
  justify-content: center;
  width: 24px;
  height: 22px;
  border-radius: 50%;
  background: #7f9a1e;
  font-family: "Liberation Serif", serif;
  font-size: 18px;
  font-weight: 700;
  color: #1b2b08;
}

.f-tile {
  position: relative;
  display: flex;
  align-items: center;
  justify-content: center;
  width: 24px;
  height: 24px;
  background: linear-gradient(135deg, #d6e8f5, #eef6fb);
  font-size: 21px;
  font-weight: 700;
  color: #dd7f28;
}

.f-mark {
  position: absolute;
  right: 1px;
  bottom: 1px;
  width: 7px;
  height: 3px;
  background: #2a9ad8;
}

.s-logo {
  font-size: 27px;
  font-weight: 700;
  line-height: 30px;
  color: #2f9a5c;
}

.watermark {
  position: absolute;
  left: 1009px;
  top: 688px;
  font-family: "Open Sans", sans-serif;
  color: rgba(110, 110, 110, .42);
  pointer-events: none;
}

.wm-big {
  font-size: 19.200px;
  line-height: 24px;
}

.wm-small {
  font-size: 14.400px;
  line-height: 20px;
}
</style>

<style>
body {
  margin: 0;
  background: #fff;
}
</style>
